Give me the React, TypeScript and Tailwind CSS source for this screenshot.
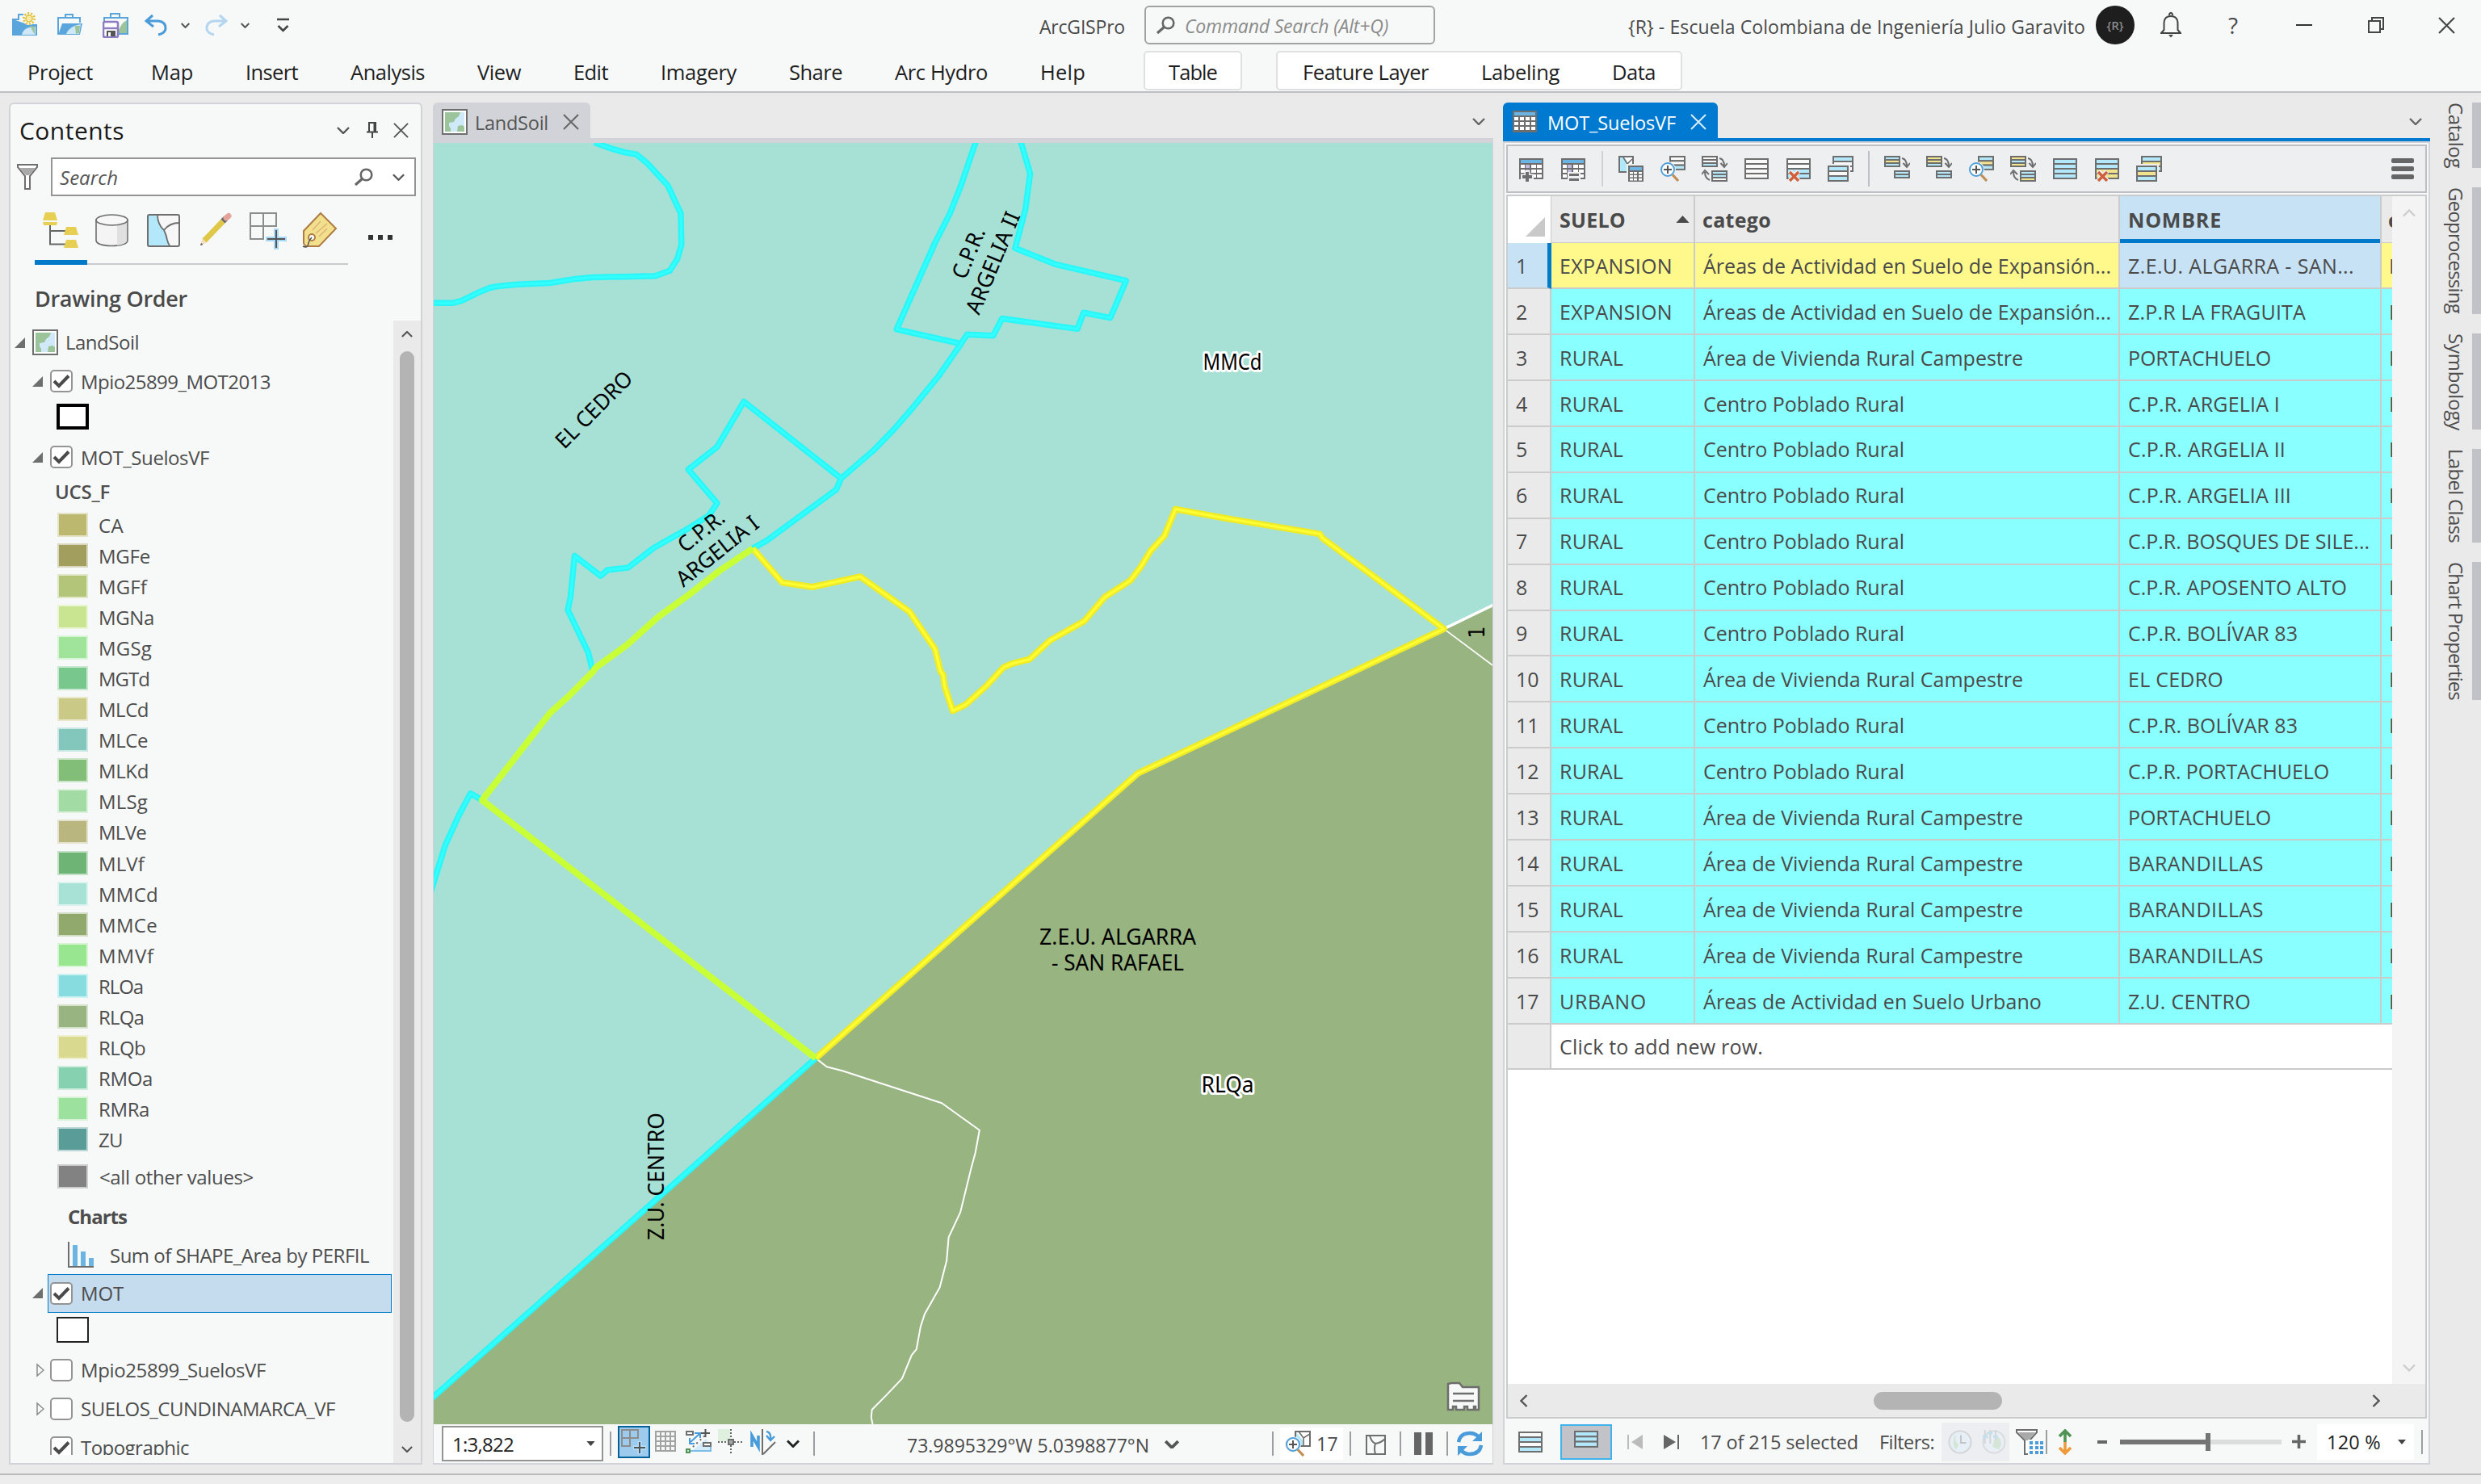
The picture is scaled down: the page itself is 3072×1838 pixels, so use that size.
import React, { useLayoutEffect, useRef, useState } from "react";

/* Text run whose tracking is adjusted so that it fills the given advance width. */
function T({ w, className = "", vertical = false, children }: { w: number; className?: string; vertical?: boolean; children: string }) {
  const ref = useRef<HTMLSpanElement>(null);
  const [ls, setLs] = useState(0);
  useLayoutEffect(() => {
    const el = ref.current;
    if (!el) return;
    el.style.letterSpacing = "0px";
    const natural = vertical ? el.getBoundingClientRect().height : el.getBoundingClientRect().width;
    const next = (w - natural) / children.length;
    el.style.letterSpacing = `${next}px`;
    setLs(next);
  }, [w, children, vertical]);
  return (
    <span ref={ref} className={`block shrink-0 whitespace-pre ${vertical ? "h-fit" : "w-fit"} ${className}`} style={{ letterSpacing: `${ls}px` }}>
      {children}
    </span>
  );
}

const G = "#6e6e6e";
const BLUE = "#6cb4e4";
const AQUA = "#b3e8fa";
const SAND = "#f1e28e";
const W = "#f9f9f9";

type IconProps = { className?: string; children?: React.ReactNode; vb?: string };
function Svg({ className = "size-8", children, vb = "0 0 32 32" }: IconProps) {
  return (
    <svg viewBox={vb} className={`block shrink-0 ${className}`} fill="none">
      {children}
    </svg>
  );
}

function Chevron({ className = "h-[9px] w-4", color = "#555", sw = 2.4, dir = "down" }: { className?: string; color?: string; sw?: number; dir?: string }) {
  const d = dir === "down" ? "M1 1 8 8 15 1" : dir === "up" ? "M1 8 8 1 15 8" : dir === "left" ? "M8 1 1 8 8 15" : "M1 1 8 8 1 15";
  const vb = dir === "down" || dir === "up" ? "0 0 16 9" : "0 0 9 16";
  return (
    <Svg className={className} vb={vb}>
      <path d={d} stroke={color} strokeWidth={sw} />
    </Svg>
  );
}

function Cross({ className = "size-[19px]", color = "#555" }: { className?: string; color?: string }) {
  return (
    <Svg className={className} vb="0 0 20 20">
      <path d="M1 1 19 19M19 1 1 19" stroke={color} strokeWidth={2} />
    </Svg>
  );
}

function Magnifier({ className = "h-[22px] w-[24px]" }: { className?: string }) {
  return (
    <Svg className={className} vb="0 0 24 22">
      <circle cx="15.5" cy="8.5" r="6.8" stroke="#666" strokeWidth="2.6" />
      <path d="M10.5 13.5 2 21" stroke="#666" strokeWidth="3.2" />
    </Svg>
  );
}

function MapIcon() {
  return (
    <Svg>
      <rect x="1" y="1" width="30" height="30" fill="#fff" stroke={G} strokeWidth="2" />
      <rect x="4" y="4" width="24" height="24" fill="#d0e9f8" />
      <path d="M4 4H23L21 9 17 12 15 16 9 17 9 21 11 24 11 28H4Z" fill="#9bc49b" />
      <path d="M19 28 20 21 25 20 28 22V28Z" fill="#9bc49b" />
    </Svg>
  );
}

/* Bordered stack of equal rows, used by the selection icons. */
function Stack({ x, y, w, rh, fills }: { x: number; y: number; w: number; rh: number; fills: string[] }) {
  return (
    <g stroke={G} strokeWidth="2">
      {fills.map((f, i) => (
        <rect key={i} x={x + 1} y={y + 1 + i * rh} width={w - 2} height={rh} fill={f} />
      ))}
    </g>
  );
}

function FieldIcon({ minus = false }: { minus?: boolean }) {
  return (
    <Svg>
      <rect x="1" y="3" width="30" height="26" fill={G} />
      <rect x="3" y="5" width="26" height="4" fill={BLUE} />
      {[11, 17, 23].map((y) =>
        [3, 9, 16, 23].map((x) => <rect key={`${x}-${y}`} x={x} y={y} width={x === 3 || x === 9 ? 5 : 6} height="4" fill={x === 9 ? "#c3bcdf" : "#fff"} />)
      )}
      {minus ? (
        <>
          <rect x="9" y="20" width="16" height="12" fill="#eeeff1" />
          <path d="M11 23.5H23M11 29.5H23" stroke={G} strokeWidth="3" />
        </>
      ) : (
        <>
          <path d="M11 18V33M3 26H19" stroke="#eeeff1" strokeWidth="7" />
          <path d="M11 20V32M5 26H17" stroke={G} strokeWidth="4" />
        </>
      )}
    </Svg>
  );
}

function CalcIcon() {
  return (
    <Svg>
      <path d="M2 1H19V20H2Z" fill={AQUA} stroke={G} strokeWidth="2" />
      <path d="M8 2H18V12L13 9Z" fill="#fff" />
      <path d="M7 2 12 10 18 4M12 10 14 19" stroke={G} strokeWidth="1.6" />
      <rect x="11" y="10" width="22" height="22" fill="#eeeff1" />
      <rect x="13" y="12" width="19" height="20" fill={G} />
      <rect x="15" y="14" width="15" height="4" fill={BLUE} />
      {[20, 24, 28].map((y) => [15, 20, 26].map((x) => <rect key={`${x}-${y}`} x={x} y={y} width="4" height="2.5" fill="#fff" />))}
    </Svg>
  );
}

function Lens() {
  return (
    <>
      <circle cx="10" cy="17" r="10" fill="#eeeff1" />
      <circle cx="10" cy="17" r="8" fill="#fff" stroke="#4f9fd8" strokeWidth="2" />
      <path d="M16 23.5 23 31" stroke="#c08f55" strokeWidth="3.2" />
      <path d="M10 12V22M5 17H15" stroke="#555" strokeWidth="2" />
    </>
  );
}

function ZoomSel({ alt = false }: { alt?: boolean }) {
  return (
    <Svg>
      <Stack x={12} y={0} w={20} rh={5.3} fills={alt ? [AQUA, SAND, AQUA] : [W, W, AQUA]} />
      <Lens />
    </Svg>
  );
}

function SwitchSel({ alt = false }: { alt?: boolean }) {
  return (
    <Svg>
      <Stack x={0} y={0} w={20} rh={4} fills={alt ? [SAND, AQUA, SAND] : [W, W, AQUA]} />
      <Stack x={12} y={18} w={20} rh={4} fills={alt ? [AQUA, AQUA, SAND] : [AQUA, AQUA, W]} />
      <path d="M22 3Q28 4 28 13M23.5 9 28 14 32 9M10 30Q4 28 4 20M0 23 4 18 9 23" stroke={G} strokeWidth="2" />
    </Svg>
  );
}

function FullStack({ fills }: { fills: string[] }) {
  return (
    <Svg>
      <Stack x={1} y={3} w={30} rh={6} fills={fills} />
    </Svg>
  );
}

function DeleteSel({ fills }: { fills: string[] }) {
  return (
    <Svg>
      <Stack x={1} y={3} w={30} rh={6} fills={fills} />
      <path d="M5 19 16 31M16 19 5 31" stroke="#eeeff1" strokeWidth="6" />
      <path d="M5 20 16 31M16 20 5 31" stroke="#d0603d" strokeWidth="3.4" />
    </Svg>
  );
}

function CopySel({ alt = false }: { alt?: boolean }) {
  return (
    <Svg>
      <Stack x={6} y={0} w={26} rh={6} fills={alt ? [AQUA, SAND, AQUA] : [AQUA, W, W]} />
      <rect x="-1" y="10" width="29" height="23" fill="#eeeff1" />
      <Stack x={0} y={12} w={26} rh={6} fills={alt ? [AQUA, SAND, AQUA] : [AQUA, W, AQUA]} />
    </Svg>
  );
}

function MoveSel({ fills }: { fills: string[] }) {
  return (
    <Svg>
      <Stack x={0} y={0} w={20} rh={4} fills={fills} />
      <Stack x={12} y={18} w={20} rh={4} fills={[AQUA, AQUA]} />
      <path d="M22 3Q28 4 28 13M23.5 9 28 14 32 9" stroke={G} strokeWidth="2" />
    </Svg>
  );
}

function TitleBar() {
  return (
    <div className="flex h-[62px] items-center text-[23px] text-[#4a4a4a]">
      <Svg className="ml-[15px] size-8">
        <path d="M0 9H8V3H14" stroke="#5aa6dc" strokeWidth="2" />
        <path d="M1 9V28H30V16H22" fill="#5aa6dc" stroke="#5aa6dc" strokeWidth="2" />
        <path d="M12 28Q14 18 29 18V28Z" fill="#cfe8f8" />
        <path d="M22 17 28 28V18Z" fill="#9bc49b" />
        <circle cx="21" cy="8" r="8" fill="#f7f9f8" />
        <circle cx="21" cy="8" r="6.5" stroke="#dfc23d" strokeWidth="3" strokeDasharray="2 2" />
        <circle cx="21" cy="8" r="4" fill="#f7eaa6" stroke="#dfc23d" strokeWidth="1.5" />
      </Svg>
      <Svg className="ml-[24px] size-8">
        <path d="M1 28V7H28V13M10 7V3H19V7" stroke="#5aa6dc" strokeWidth="2" />
        <path d="M6 14H31L28 28H1Z" fill="#5aa6dc" />
        <path d="M11 27Q15 17 29 15L27 27Z" fill="#cfe8f8" />
        <path d="M22 17 23 27 27 26 28 17Z" fill="#9bc49b" />
      </Svg>
      <Svg className="ml-[24px] size-8">
        <path d="M2 12V7H31V27H18M10 7V2H21V7" stroke="#5aa6dc" strokeWidth="2" />
        <path d="M19 26Q22 14 30 10V26Z" fill="#9bc49b" />
        <rect x="1" y="12" width="18" height="19" rx="2" fill="#fff" stroke="#8e7cc3" strokeWidth="2.6" />
        <path d="M2 20H18" stroke="#8e7cc3" strokeWidth="2.4" />
        <rect x="5" y="23" width="11" height="7" fill="#555" />
        <rect x="7" y="25" width="3" height="5" fill="#fff" />
      </Svg>
      <Svg className="ml-[20px] h-[28px] w-[29px]" vb="0 0 29 28">
        <path d="M10 2 2 9 11 16M3 9H17Q26 10 26 18 26 24 17 26" stroke="#4a9bd9" strokeWidth="3" />
      </Svg>
      <Chevron className="ml-[16px] h-[7px] w-[11px]" sw={3} />
      <Svg className="ml-[18px] h-[28px] w-[29px]" vb="0 0 29 28">
        <path d="M19 2 27 9 18 16M26 9H12Q3 10 3 18 3 24 12 26" stroke="#b4d6f0" strokeWidth="3" />
      </Svg>
      <Chevron className="ml-[16px] h-[7px] w-[11px]" sw={3} />
      <Svg className="ml-[34px] h-[18px] w-[15px]" vb="0 0 15 18">
        <path d="M0 2H15M1.5 10 7.5 16 13.5 10" stroke="#444" strokeWidth="2.6" />
      </Svg>
      <T w={106} className="ml-[929px] pt-1">ArcGISPro</T>
      <div className="ml-[24px] flex h-[48px] w-[360px] items-center rounded-[6px] border-2 border-[#a0a2a4] bg-[#f7f9f8] text-[#8b8b8b]">
        <Magnifier className="ml-[12px] h-[22px] w-[24px]" />
        <T w={252} className="ml-[12px] pt-0.5 italic">Command Search (Alt+Q)</T>
      </div>
      <T w={566} className="ml-[239px] pt-1">{"{R} - Escuela Colombiana de Ingeniería Julio Garavito"}</T>
      <div className="ml-[13px] flex size-[48px] items-center justify-center rounded-full bg-[#1e1e1e] text-[15px] font-semibold text-[#8a8a8a]">{"{R}"}</div>
      <Svg className="ml-[32px] h-[32px] w-[26px]" vb="0 0 26 32">
        <path d="M1 26H25L21.5 22V13Q21 5 13 5 5 5 4.5 13V22L1 26ZM11 4Q11 1 13 1 15 1 15 4" stroke="#444" strokeWidth="2" />
        <path d="M10 28H16L13 31.5Z" fill="#444" />
      </Svg>
      <T w={15} className="ml-[58px] text-[28px]">?</T>
      <Svg className="ml-[69px] h-[4px] w-[20px]" vb="0 0 20 4">
        <path d="M0 2H20" stroke="#333" strokeWidth="2" />
      </Svg>
      <Svg className="ml-[69px] size-[20px]" vb="0 0 20 20">
        <path d="M1 5H15V19H1ZM5 5V1H19V15H15" stroke="#444" strokeWidth="2" />
      </Svg>
      <Cross className="ml-[67px] size-[21px]" color="#444" />
    </div>
  );
}

function Ribbon() {
  return (
    <div className="flex h-[51px] items-center text-[25.5px] text-[#1f1f1f]">
      <T w={81} className="ml-[34px] pt-[3px]">Project</T>
      <div className="ml-[72px] flex gap-[65px] pt-[3px]">
        <T w={52}>Map</T>
        <T w={65}>Insert</T>
        <T w={92}>Analysis</T>
        <T w={54}>View</T>
        <T w={43}>Edit</T>
        <T w={94}>Imagery</T>
        <T w={66}>Share</T>
        <T w={115}>Arc Hydro</T>
        <T w={56}>Help</T>
      </div>
      <div className="ml-[72px] flex h-[49px] w-[122px] items-center justify-center rounded-[5px] border-2 border-[#dfe0e1] bg-white pt-[3px]">
        <T w={60}>Table</T>
      </div>
      <div className="ml-[42px] flex h-[49px] w-[503px] items-center gap-[65px] rounded-[5px] border-2 border-[#dfe0e1] bg-white pt-[3px] pl-[31px]">
        <T w={156}>Feature Layer</T>
        <T w={97}>Labeling</T>
        <T w={54}>Data</T>
      </div>
    </div>
  );
}

const legend: [string, string, number][] = [
  ["CA", "bg-[#bdb870]", 31],
  ["MGFe", "bg-[#a19e5e]", 64],
  ["MGFf", "bg-[#b3c578]", 60],
  ["MGNa", "bg-[#c9e591]", 69],
  ["MGSg", "bg-[#a0e39b]", 66],
  ["MGTd", "bg-[#78c78d]", 63],
  ["MLCd", "bg-[#cac985]", 62],
  ["MLCe", "bg-[#82c6bc]", 61],
  ["MLKd", "bg-[#82be78]", 62],
  ["MLSg", "bg-[#a3dba5]", 61],
  ["MLVe", "bg-[#b9b67f]", 59],
  ["MLVf", "bg-[#6eb575]", 57],
  ["MMCd", "bg-[#a8e1d6]", 74],
  ["MMCe", "bg-[#92a96e]", 73],
  ["MMVf", "bg-[#98e68f]", 69],
  ["RLOa", "bg-[#86dcdf]", 55],
  ["RLQa", "bg-[#98b480]", 56],
  ["RLQb", "bg-[#d9da90]", 58],
  ["RMOa", "bg-[#86d2b0]", 67],
  ["RMRa", "bg-[#9de19f]", 63],
  ["ZU", "bg-[#5a9c97]", 30],
];

function Check({ on = false }: { on?: boolean }) {
  return (
    <div className="flex size-[28px] shrink-0 items-center justify-center rounded-[5px] border-2 border-[#949494] bg-white">
      {on && (
        <Svg className="h-[18px] w-[22px]" vb="0 0 22 18">
          <path d="M2 9 8 15 20 2.5" stroke="#4a4a4a" strokeWidth="4" />
        </Svg>
      )}
    </div>
  );
}

function Open() {
  return (
    <Svg className="h-[13px] w-[13px]" vb="0 0 13 13">
      <path d="M13 0V13H0Z" fill={G} />
    </Svg>
  );
}

function Layer({ name, w, on = false, open = "open", selected = false }: { name: string; w: number; on?: boolean; open?: string; selected?: boolean }) {
  return (
    <div className="flex h-[48px] shrink-0 items-center">
      <div className="flex w-[46px] justify-end">
        {open === "open" && (
          <div className="mr-[6px]">
            <Open />
          </div>
        )}
        {open === "closed" && (
          <Svg className="mr-[4px] h-[18px] w-[10px]" vb="0 0 10 18">
            <path d="M1 2V16L9 9Z" stroke="#8a8a8a" strokeWidth="1.5" />
          </Svg>
        )}
      </div>
      <div className={`flex h-full w-[426px] items-center border pl-[2px] ${selected ? "border-[#0079c8] bg-[#c5dbee]" : "border-transparent"}`}>
        <Check on={on} />
        <T w={w} className="ml-[10px] pt-px">{name}</T>
      </div>
    </div>
  );
}

function Contents() {
  return (
    <div className="mt-[12px] ml-[11px] flex h-[1687px] w-[512px] shrink-0 flex-col rounded-t-[6px] border-2 border-[#d1d3d8] bg-[#f7f9f8]">
      <div className="flex h-[64px] items-center">
        <T w={130} className="ml-[11px] text-[30px] text-[#1a1a1a]">Contents</T>
        <Chevron className="ml-[263px] h-[9px] w-4" />
        <Svg className="ml-[21px] h-[20px] w-[14px]" vb="0 0 14 20">
          <path d="M3 12V1H11V12M0 12.5H14M7 13V20" stroke="#444" strokeWidth="2" />
          <path d="M10 1V12" stroke="#444" strokeWidth="3" />
        </Svg>
        <Cross className="ml-[19px] size-[19px]" />
      </div>
      <div className="mt-[2px] flex h-[48px] items-center text-[24px]">
        <Svg className="ml-[8px] h-[32px] w-[26px]" vb="0 0 26 32">
          <path d="M1 1H25V4L16 15V31H10V15L1 4Z" fill="#fff" stroke={G} strokeWidth="2" />
          <path d="M3 5H23L15 14H11Z" fill="#a9a9a9" />
        </Svg>
        <div className="ml-[16px] flex h-full w-[452px] items-center border-2 border-[#949494] bg-white text-[#555]">
          <T w={72} className="ml-[9px] pt-px italic">Search</T>
          <Magnifier className="ml-auto h-[22px] w-[24px]" />
          <Chevron className="mr-[12px] ml-[24px] h-[9px] w-[15px]" />
        </div>
      </div>
      <div className="mt-[18px] flex h-[67px]">
        <div className="ml-[30px] grid w-[388px] grid-cols-6 border-b-2 border-[#c8cacc]">
          <div className="-mb-[2px] flex justify-center border-b-[6px] border-[#0079c8]">
            <Svg className="size-12" vb="0 0 48 48">
              <path d="M11 18V41.5H30M11 25H30" stroke="#666" strokeWidth="2" />
              <path d="M5 2H17L20 12H2ZM2 14H20L19 18H3ZM31 20H43L46 30H28ZM31 36H43L46 46H28Z" fill="#e6cf52" />
            </Svg>
          </div>
          <div className="flex justify-center pr-[3px]">
            <Svg className="size-12" vb="0 0 48 48">
              <path d="M5 11V37Q6 43 24 43.5 43 43 44 37V11Z" fill="#f4f4f4" stroke={G} strokeWidth="1.6" />
              <path d="M31 17V43Q43 41 43 37V12Q42 16 31 17Z" fill="#e0e0e0" />
              <ellipse cx="24.5" cy="11.5" rx="19.5" ry="6.5" fill="#f7f7f7" stroke={G} strokeWidth="1.6" />
            </Svg>
          </div>
          <div className="flex justify-center pr-[3px]">
            <Svg className="size-12" vb="0 0 48 48">
              <rect x="4" y="5" width="39" height="39" rx="2" fill="#f7f7f7" />
              <path d="M4 5H16Q16 18 24 24 28 34 31 44H4Z" fill={AQUA} />
              <path d="M16 5Q16 17 24 24 27 30 28 36 30 43 32 44M24 24Q31 15 43 15" stroke={G} strokeWidth="1.8" />
              <rect x="4" y="5" width="39" height="39" rx="2" stroke={G} strokeWidth="2" />
            </Svg>
          </div>
          <div className="flex justify-center pr-[4px]">
            <Svg className="size-12" vb="0 0 48 48">
              <path d="M10 37 33 13" stroke="#dfc848" strokeWidth="7" />
              <path d="M33 13 36.5 9.5" stroke="#666" strokeWidth="7" />
              <path d="M37 9 40 6.5" stroke="#e5a49a" strokeWidth="7" strokeLinecap="round" />
              <path d="M7.5 34.5 12.5 39.5 5 43Z" fill="#f5dcc0" />
              <path d="M5 43 6 40 8.5 42Z" fill="#555" />
            </Svg>
          </div>
          <div className="flex justify-center pr-[2px]">
            <Svg className="size-12" vb="0 0 48 48">
              <path d="M1 3H33V19H1ZM17 3V35H1V3M17 19V35" stroke="#8c8c8c" strokeWidth="2" />
              <path d="M33 22V48M20 35H46" stroke="#a8d8f5" strokeWidth="6" />
              <path d="M33 24V46M22 35H44" stroke="#555" strokeWidth="2" />
            </Svg>
          </div>
          <div className="flex justify-center pr-[4px]">
            <Svg className="size-12" vb="0 0 48 48">
              <path d="M24 3 43 22 22 44H6Q3 42 3 40V25Z" fill="#f2e08c" stroke="#b07c45" strokeWidth="2" />
              <path d="M14 24 24 13M18 28 32 16M22 32 32 22" stroke="#dfb37c" strokeWidth="1.5" />
              <circle cx="13" cy="33" r="4" fill="#fff" stroke="#b07c45" strokeWidth="2" />
              <path d="M13 33Q10 36 9 40 8 47 2 44" stroke="#555" strokeWidth="1.6" />
            </Svg>
          </div>
        </div>
        <div className="mt-[30px] ml-[25px] flex gap-[6px]">
          <div className="size-[6px] bg-[#333]" />
          <div className="size-[6px] bg-[#333]" />
          <div className="size-[6px] bg-[#333]" />
        </div>
      </div>
      <div className="h-[69px] pt-[28px] pl-[30px] text-[27px] leading-[28px] font-semibold text-[#4a4a4a]">
        <T w={189}>Drawing Order</T>
      </div>
      <div className="flex text-[24px] text-[#4d4d4d]">
        <div className="flex h-[1405px] w-[474px] flex-col overflow-hidden pt-[3px]">
          <div className="flex h-[48px] shrink-0 items-center pl-[5px]">
            <Open />
            <div className="ml-[9px]">
              <MapIcon />
            </div>
            <T w={91} className="ml-[9px]">LandSoil</T>
          </div>
          <Layer name="Mpio25899_MOT2013" w={235} on />
          <div className="h-[46px] shrink-0 pt-[4px] pl-[57px]">
            <div className="h-[32px] w-[40px] border-4 border-black bg-white" />
          </div>
          <Layer name="MOT_SuelosVF" w={159} on />
          <div className="flex h-[38px] shrink-0 items-center pl-[55px] font-semibold">
            <T w={68}>UCS_F</T>
          </div>
          <div className="mt-[3px] flex shrink-0 flex-col">
            {legend.map(([n, c, w]) => (
              <div key={n} className="flex h-[38.05px] items-center pl-[58px]">
                <div className={`h-[30px] w-[38px] border-2 border-white/60 ${c}`} />
                <T w={w} className="ml-[13px] pt-[2px]">{n}</T>
              </div>
            ))}
          </div>
          <div className="mt-[4px] flex h-[46px] shrink-0 items-center pl-[58px]">
            <div className="h-[30px] w-[38px] border-2 border-white/60 bg-[#828282]" />
            <T w={191} className="ml-[14px] pt-[2px]">{"<all other values>"}</T>
          </div>
          <div className="mt-[2px] flex h-[48px] shrink-0 items-center pt-[2px] pl-[71px] font-bold">
            <T w={73}>Charts</T>
          </div>
          <div className="flex h-[48px] shrink-0 items-center pl-[71px]">
            <Svg>
              <path d="M1 0V31H32" stroke={G} strokeWidth="2" />
              <path d="M6 4H12V30H6ZM16 12H22V30H16ZM26 20H32V30H26Z" fill={BLUE} />
            </Svg>
            <T w={321} className="ml-[20px] pt-[2px]">Sum of SHAPE_Area by PERFIL</T>
          </div>
          <Layer name="MOT" w={53} on selected />
          <div className="h-[47px] shrink-0 pt-[5px] pl-[57px]">
            <div className="h-[32px] w-[40px] border-2 border-[#222] bg-white" />
          </div>
          <Layer name="Mpio25899_SuelosVF" w={229} open="closed" />
          <Layer name="SUELOS_CUNDINAMARCA_VF" w={315} open="closed" />
          <Layer name="Topographic" w={134} on open="none" />
        </div>
        <div className="flex h-[1415px] w-[34px] flex-col items-center bg-[#eaeaea] pt-[13px]">
          <Chevron dir="up" className="h-[8px] w-[14px]" />
          <div className="mt-[17px] h-[1326px] w-[18px] rounded-full bg-[#b4b4b4]" />
          <Chevron className="mt-[30px] h-[8px] w-[14px]" />
        </div>
      </div>
    </div>
  );
}

/* Map lines are digitised on a sheet that is stretched to the view's size. */
const road = "243,14 270,32 288,41 304,46 320,70 350,130 362,178 369,205 370,290 364,328 353,360 332,374 240,378 215,382 178,393 130,397 105,401 90,406 72,420 50,440 37,447 0,447";
const argelia2 = "800,10 778,130 762,205 740,285 684,518 778,557 787,532 825,535 838,489 948,517 957,473 996,487 1019,387 915,342 857,299 872,195 879,98 865,10";
const argelia1 = "778,557 745,645 705,735 680,788 650,845 603,920 461,713 422,835 380,896 422,987 410,1020 380,1055 330,1107 310,1135 292,1161 262,1167 252,1183 214,1129 208,1240 204,1275 234,1390 240,1437";
const link = "603,920 596,950 495,1087 474,1109";
const west = "79,1788 62,1770 45,1829 25,1910 8,2012 0,2060";
const south = "566,2484 0,3410";
const yellow = "474,1109 517,1201 561,1213 631,1185 703,1280 740,1380 748,1440 752,1450 754,1480 766,1547 785,1530 815,1480 840,1430 852,1420 878,1408 908,1357 958,1305 988,1240 1025,1196 1040,1160 1055,1115 1075,1075 1085,1030 1091,1003 1165,1028 1302,1070 1305,1080 1483,1326 1036,1716 566,2484";
const lime = "474,1109 425,1170 385,1228 335,1295 290,1370 245,1430 240,1443 205,1508 178,1553 79,1788 566,2484";
const stream = "568,2487 582,2507 605,2518 750,2605 805,2678 799,2739 793,2780 777,2900 760,2967 757,3031 747,3102 725,3174 719,3208 713,3269 706,3285 692,3348 670,3391 648,3432 647,3453 650,3480";

function Line({ p, c, w }: { p: string; c: string; w: number }) {
  return <polyline points={p} stroke={c} strokeWidth={w} fill="none" vectorEffect="non-scaling-stroke" strokeLinejoin="round" />;
}

function Label({ x, y, len, rot = 0, halo = false, children }: { x: number; y: number; len: number; rot?: number; halo?: boolean; children: string }) {
  return (
    <text
      transform={`translate(${x} ${y}) rotate(${rot})`}
      textAnchor="middle"
      textLength={len}
      lengthAdjust="spacingAndGlyphs"
      fontSize="27"
      fill="#000"
      stroke={halo ? "#fff" : "none"}
      strokeWidth={halo ? 6 : 0}
      strokeLinejoin="round"
      paintOrder="stroke"
      className="font-['Noto_Sans',sans-serif]"
    >
      {children}
    </text>
  );
}

function MapView() {
  return (
    <svg viewBox="0 0 1311 1587" className="block h-[1587px] w-[1311px] bg-[#a7e1d6]">
      <g transform="translate(-7 -7) scale(0.8482 0.4592)">
        <polygon points="1570,1248 1483,1326 1036,1716 566,2484 0,3410 0,3500 1570,3500" fill="#98b480" />
        <Line p="1483,1326 1570,1248" c="#fff" w={3.5} />
        <Line p="1483,1326 1570,1446" c="#fff" w={1.8} />
        <Line p={stream} c="#fff" w={2} />
        {[road, argelia2, argelia1, link, west, south].map((p) => (
          <g key={p}>
            <Line p={p} c="#2af5f7" w={7.5} />
            <Line p={p} c="#33ffff" w={3} />
          </g>
        ))}
        <Line p={yellow} c="#efeb26" w={8} />
        <Line p={yellow} c="#ffff33" w={3} />
        <Line p={lime} c="#c8ff36" w={8} />
      </g>
      <Label x={989} y={281} len={73} halo>MMCd</Label>
      <Label x={205} y={337} len={122} rot={-45}>EL CEDRO</Label>
      <Label x={671} y={140} len={66} rot={-67.5}>C.P.R.</Label>
      <Label x={701} y={152} len={134} rot={-67.5}>ARGELIA II</Label>
      <Label x={337} y={488} len={66} rot={-38.5}>C.P.R.</Label>
      <Label x={357} y={513} len={122} rot={-38.5}>ARGELIA I</Label>
      <text transform="translate(1301 606) rotate(-90)" textAnchor="middle" fontSize="26" className="font-['DejaVu_Sans_Condensed','DejaVu_Sans',sans-serif]">1</text>
      <Label x={847} y={993} len={194}>Z.E.U. ALGARRA</Label>
      <Label x={847} y={1025} len={164}>- SAN RAFAEL</Label>
      <Label x={983} y={1176} len={65} halo>RLQa</Label>
      <Label x={285} y={1280} len={158} rot={-90}>Z.U. CENTRO</Label>
      <path d="M1256 1537V1569H1262V1565H1266V1569H1276V1565H1280V1569H1288V1565H1290V1569H1294V1541H1274L1270 1536H1260Z" fill="#f7f9f8" stroke={G} strokeWidth="2.5" />
      <path d="M1262 1549H1288M1262 1558H1288" stroke={G} strokeWidth="2.5" />
    </svg>
  );
}

function Sep({ className }: { className: string }) {
  return <div className={`h-[30px] w-[2px] shrink-0 bg-[#9c9fa1] ${className}`} />;
}

function MapPane() {
  return (
    <div className="mt-[12px] ml-[13px] flex w-[1313px] shrink-0 flex-col">
      <div className="flex h-[44px] items-center">
        <div className="flex h-full w-[195px] items-center rounded-t-[6px] bg-[#d1d3d8] text-[23.5px] text-[#555]">
          <div className="ml-[11px] pt-[4px]">
            <MapIcon />
          </div>
          <T w={91} className="ml-[9px] pt-[7px]">LandSoil</T>
          <Cross className="mt-[4px] ml-[18px] size-[20px]" color="#666" />
        </div>
        <Chevron className="mt-[3px] mr-[10px] ml-auto h-[9px] w-4" color="#666" />
      </div>
      <div className="h-[6px] bg-[#d1d3d8]" />
      <div className="h-[1637px] overflow-hidden border border-t-0 border-b-2 border-[#d1d3d8] bg-[#f7f9f8]">
        <MapView />
        <div className="flex h-[48px] items-center text-[23px] text-[#4a4a4a]">
          <div className="ml-[10px] flex h-[44px] w-[200px] shrink-0 items-center border-2 border-[#949494] bg-white text-[24px] text-[#222]">
            <T w={76} className="ml-[11px] pt-px">1:3,822</T>
            <Svg className="mr-[8px] mb-px ml-auto h-[6px] w-[11px]" vb="0 0 12 7">
              <path d="M0 0H12L6 7Z" fill="#444" />
            </Svg>
          </div>
          <Sep className="ml-[8px]" />
          <div className="mb-[4px] ml-[8px] flex h-[40px] w-[40px] shrink-0 items-center justify-center border-2 border-[#00619b] bg-[#9dcbed]">
            <Svg>
              <path d="M1 1H21V11H1ZM11 1V21H1V1" stroke="#8c8c8c" strokeWidth="2" />
              <path d="M23 15V31M15 23H31" stroke="#b4dffa" strokeWidth="5" />
              <path d="M23 16V30M16 23H30" stroke="#555" strokeWidth="2" />
            </Svg>
          </div>
          <Svg className="mb-[6px] ml-[6px] size-[26px]" vb="0 0 26 26">
            <path d="M1 1H25V25H1ZM1 7H25M1 13H25M1 19H25M7 1V25M13 1V25M19 1V25" stroke="#a3a3a3" strokeWidth="2" />
          </Svg>
          <Svg className="mb-[4px] ml-[12px] size-8">
            <path d="M8 27 25 12Q30 18 31 27Z" fill="#d3ebfb" />
            <path d="M5 27H32M31 22V27" stroke="#7dbde8" strokeWidth="2" />
            <path d="M9 22 24 8" stroke="#666" strokeWidth="2" strokeDasharray="2 4" />
            <path d="M6 16 17 6M11 5H18V11M5 11V18H11" stroke="#4a9bd9" strokeWidth="2" />
            <path d="M1 3H9V7H1ZM22 17H31V21H22Z" fill="#fff" stroke={G} strokeWidth="2" />
            <path d="M24.500 0V10M19 5H30" stroke="#555" strokeWidth="2" />
            <path d="M1 25H5V29H1Z" fill="#cfe6d0" stroke="#4f9455" strokeWidth="2" />
          </Svg>
          <Svg className="mb-[4px] ml-[8px] size-8">
            <path d="M0 0H15V15H0Z" fill="#dff0df" />
            <path d="M16 0V32M0 16H32" stroke="#666" strokeWidth="2" strokeDasharray="2 2" />
            <rect x="13" y="13" width="6" height="6" fill="#aaa" stroke={G} strokeWidth="2" />
          </Svg>
          <Svg className="mb-[4px] ml-[8px] size-8">
            <path d="M2 22V8L10 22V8" stroke="#4a9bd9" strokeWidth="3.6" />
            <path d="M15 0V32M16 31 31 16" stroke={G} strokeWidth="2" />
            <path d="M20 3Q26 4 25 13M20 8 25 14 30 9" stroke="#4a9bd9" strokeWidth="2.400" />
          </Svg>
          <Chevron className="ml-[13px] h-[10px] w-[16px]" color="#222" sw={3} />
          <Sep className="ml-[17px]" />
          <T w={300} className="ml-[114px] pt-[5px]">73.9895329°W 5.0398877°N</T>
          <Chevron className="mt-[2px] ml-[19px] h-[10px] w-[18px]" color="#555" sw={3.4} />
          <Sep className="ml-[115px]" />
          <div className="ml-[8px] flex h-[40px] w-[78px] shrink-0 items-center bg-white">
            <Svg className="ml-[6px] size-8">
              <path d="M13 1H31V19H13Z" fill="#fff" stroke={G} strokeWidth="2" />
              <path d="M14 2 22 12V18H14Z" fill={AQUA} />
              <path d="M17 1 23 9 31 4M23 9V19" stroke={G} strokeWidth="1.6" />
              <Lens />
            </Svg>
            <T w={27} className="ml-[7px] pt-px">17</T>
          </div>
          <Sep className="ml-[8px]" />
          <Svg className="mt-[2px] ml-[18px] size-[25px]" vb="0 0 25 25">
            <path d="M1 1H24V24H1ZM5 1Q7 9 12 11 19 10 24 5M12 11Q10 17 12 24" stroke={G} strokeWidth="2" />
          </Svg>
          <Sep className="ml-[17px]" />
          <div className="ml-[16px] flex gap-[5px]">
            <div className="h-[28px] w-[9px] bg-[#666]" />
            <div className="h-[28px] w-[9px] bg-[#666]" />
          </div>
          <Sep className="ml-[17px]" />
          <Svg className="ml-[11px] size-8">
            <path d="M2 14Q4 3 16 3 23 3 27 8M30 18Q28 29 16 29 9 29 5 24" stroke="#4a9bd9" strokeWidth="4.5" />
            <path d="M31 1V13H19ZM1 31V19H13Z" fill="#4a9bd9" />
          </Svg>
        </div>
      </div>
    </div>
  );
}

type Cell = [string, number];
const EXP: Cell = ["EXPANSION", 140];
const RUR: Cell = ["RURAL", 79];
const A1: Cell = ["Áreas de Actividad en Suelo de Expansión...", 505];
const VIV: Cell = ["Área de Vivienda Rural Campestre", 396];
const CEN: Cell = ["Centro Poblado Rural", 249];
const rows: [Cell, Cell, Cell][] = [
  [EXP, A1, ["Z.E.U. ALGARRA - SAN...", 280]],
  [EXP, A1, ["Z.P.R LA FRAGUITA", 220]],
  [RUR, VIV, ["PORTACHUELO", 177]],
  [RUR, CEN, ["C.P.R. ARGELIA I", 188]],
  [RUR, CEN, ["C.P.R. ARGELIA II", 195]],
  [RUR, CEN, ["C.P.R. ARGELIA III", 202]],
  [RUR, CEN, ["C.P.R. BOSQUES DE SILE...", 299]],
  [RUR, CEN, ["C.P.R. APOSENTO ALTO", 271]],
  [RUR, CEN, ["C.P.R. BOLÍVAR 83", 210]],
  [RUR, VIV, ["EL CEDRO", 118]],
  [RUR, CEN, ["C.P.R. BOLÍVAR 83", 210]],
  [RUR, CEN, ["C.P.R. PORTACHUELO", 249]],
  [RUR, VIV, ["PORTACHUELO", 177]],
  [RUR, VIV, ["BARANDILLAS", 168]],
  [RUR, VIV, ["BARANDILLAS", 168]],
  [RUR, VIV, ["BARANDILLAS", 168]],
  [["URBANO", 108], ["Áreas de Actividad en Suelo Urbano", 419], ["Z.U. CENTRO", 152]],
];

function Grid() {
  return (
    <div className="flex h-[1471px] bg-white text-[25px] text-[#4a4a4a]">
      <div className="w-[1095px] overflow-hidden">
        <div className="flex h-[58px] bg-[#eaeaea] font-bold">
          <div className="flex w-[54px] shrink-0 items-end justify-end border-r border-[#cbcbcb] bg-white pr-[7px] pb-[8px]">
            <Svg className="size-6" vb="0 0 24 24">
              <path d="M24 0V24H0Z" fill="#c9c9c9" />
            </Svg>
          </div>
          <div className="flex w-[178px] shrink-0 items-center border-r-2 border-b border-[#cbcbcb] pl-[10px]">
            <T w={82} className="pt-[2px]">SUELO</T>
            <Svg className="mr-[5px] ml-auto h-[9px] w-[17px]" vb="0 0 18 10">
              <path d="M0 10 9 0 18 10Z" fill="#4a4a4a" />
            </Svg>
          </div>
          <div className="flex w-[526px] shrink-0 items-center border-r-2 border-b border-[#cbcbcb] pt-[2px] pl-[9px]">
            <T w={85}>catego</T>
          </div>
          <div className="flex w-[324px] shrink-0 border-r-2 border-[#cbcbcb]">
            <div className="flex w-full items-center border-b-[5px] border-[#007ac9] bg-[#c7e2f5] pt-[7px] pl-[10px]">
              <T w={116}>NOMBRE</T>
            </div>
          </div>
          <div className="flex w-[13px] shrink-0 items-center overflow-hidden border-b border-[#cbcbcb] pt-[2px] pl-[8px]">c</div>
        </div>
        {rows.map(([a, b, c], i) => {
          const bg = i === 0 ? "bg-[#fff88a]" : "bg-[#8affff]";
          return (
            <div key={i} className="flex h-[56.94px]">
              <div className={`flex w-[54px] shrink-0 items-center border-b-2 border-b-[#cbcbcb] pt-[2px] pl-[10px] ${i === 0 ? "border-r-[5px] border-r-[#007ac9] bg-[#c7e2f5]" : "border-r-2 border-r-[#cbcbcb] bg-[#eaeaea]"}`}>
                {i + 1}
              </div>
              <div className={`flex w-[178px] shrink-0 items-center border-r-2 border-b-2 border-[#cbcbcb] pt-[2px] pl-[10px] ${bg}`}>
                <T w={a[1]}>{a[0]}</T>
              </div>
              <div className={`flex w-[526px] shrink-0 items-center border-r-2 border-b-2 border-[#cbcbcb] pt-[2px] pl-[10px] ${bg}`}>
                <T w={b[1]}>{b[0]}</T>
              </div>
              <div className={`flex w-[324px] shrink-0 items-center border-r-2 border-b-2 border-[#cbcbcb] pt-[2px] pl-[10px] ${i === 0 ? "bg-[#c7e2f5]" : bg}`}>
                <T w={c[1]}>{c[0]}</T>
              </div>
              <div className={`flex w-[13px] shrink-0 items-center overflow-hidden border-b-2 border-[#cbcbcb] pt-[2px] pl-[9px] ${bg}`}>E</div>
            </div>
          );
        })}
        <div className="flex h-[56px]">
          <div className="w-[54px] shrink-0 border-r-2 border-b-2 border-[#cbcbcb] bg-[#eaeaea]" />
          <div className="flex w-full items-center border-b-2 border-[#cbcbcb] pt-[2px] pl-[10px]">
            <T w={252}>Click to add new row.</T>
          </div>
        </div>
      </div>
      <div className="flex flex-1 flex-col items-center justify-between bg-[#f4f4f4] pt-[16px] pb-[15px]">
        <Chevron dir="up" className="h-[10px] w-[16px]" color="#cdcdcd" />
        <Chevron className="h-[10px] w-[16px]" color="#cdcdcd" />
      </div>
    </div>
  );
}

function Toolbar() {
  return (
    <div className="mt-[2px] ml-[2px] flex h-[60px] w-[1140px] items-center border-2 border-[#bcbfc3] bg-[#eeeff1]">
      <div className="ml-[13px] flex gap-[20px]">
        <FieldIcon />
        <FieldIcon minus />
      </div>
      <div className="ml-[19px] h-[44px] w-[2px] bg-[#d0d2d4]" />
      <div className="ml-[18px] flex gap-[20px]">
        <CalcIcon />
        <ZoomSel />
        <SwitchSel />
        <FullStack fills={[W, W, W, W]} />
        <DeleteSel fills={[W, W, AQUA, AQUA]} />
        <CopySel />
      </div>
      <div className="ml-[18px] h-[44px] w-[2px] bg-[#bcbfc3]" />
      <div className="ml-[18px] flex gap-[20px]">
        <MoveSel fills={[AQUA, SAND, AQUA]} />
        <MoveSel fills={[SAND, SAND, AQUA]} />
        <ZoomSel alt />
        <SwitchSel alt />
        <FullStack fills={[AQUA, AQUA, AQUA, AQUA]} />
        <DeleteSel fills={[AQUA, AQUA, SAND, SAND]} />
        <CopySel alt />
      </div>
      <div className="mr-[14px] ml-auto flex w-[28px] flex-col gap-[4px]">
        <div className="h-[6px] rounded-[2px] bg-[#666]" />
        <div className="h-[6px] rounded-[2px] bg-[#666]" />
        <div className="h-[6px] rounded-[2px] bg-[#666]" />
      </div>
    </div>
  );
}

function TableStatus() {
  return (
    <div className="flex h-[55px] items-center pt-[2px] text-[23.5px] text-[#4a4a4a]">
      <div className="ml-[16px]">
        <FullStack fills={[W, AQUA, W, AQUA]} />
      </div>
      <div className="ml-[21px] flex h-[44px] w-[64px] items-center justify-center border-2 border-[#3fb3ee] bg-[#c1c3c9] pb-[6px]">
        <Svg className="h-[22px] w-[30px]" vb="0 0 30 22">
          <Stack x={0} y={0} w={30} rh={6.3} fills={[AQUA, AQUA, AQUA]} />
        </Svg>
      </div>
      <Svg className="ml-[19px] h-[18px] w-[19px]" vb="0 0 19 18">
        <path d="M1 0V18" stroke="#bbb" strokeWidth="2" />
        <path d="M19 0V18L5 9Z" fill="#bbb" />
      </Svg>
      <Svg className="ml-[26px] h-[18px] w-[19px]" vb="0 0 19 18">
        <path d="M18 0V18" stroke="#666" strokeWidth="2" />
        <path d="M0 0V18L15 9Z" fill="#666" />
      </Svg>
      <T w={196} className="ml-[26px] pt-[3px]">17 of 215 selected</T>
      <T w={68} className="ml-[26px] pt-[3px]">Filters:</T>
      <div className="ml-[9px] flex h-[48px] w-[84px] items-center justify-center gap-[12px] bg-[#edeef1] pl-[3px]">
        <Svg className="size-[30px]">
          <circle cx="16" cy="16" r="14.5" fill="#e6eef6" stroke="#d2d4d6" strokeWidth="2" />
          <path d="M10 6Q4 16 10 26L14 20 10 14Z" fill="#d5e6d8" />
          <path d="M17 7V17H24" stroke="#c2c4c6" strokeWidth="2" />
        </Svg>
        <Svg className="size-[30px]">
          <circle cx="16" cy="16" r="14.5" fill="#e9eff5" stroke="#d8dadc" strokeWidth="2" />
          <path d="M20 8Q30 16 22 26L14 22 16 14Z" fill="#d5e6d8" />
          <path d="M4 0V18M11 0V18M18 0V14" stroke="#d3d5d7" strokeWidth="2" />
          <path d="M1 9H8M8 4H14M15 9H21" stroke="#c4e0ec" strokeWidth="4" />
        </Svg>
      </div>
      <Svg className="ml-[8px] h-[32px] w-[34px]" vb="0 0 34 32">
        <path d="M1 1H26V4L17 14V31H11V14L1 4Z" fill="#fff" stroke={G} strokeWidth="2" />
        <path d="M3 4H24L16 14H12Z" fill="#a9a9a9" />
        <rect x="15" y="13" width="19" height="19" fill="#f7f9f8" />
        <path d="M19 15V31M26 15V31M32 15V31" stroke="#4a9bd9" strokeWidth="4" strokeDasharray="4 2" />
      </Svg>
      <Sep className="ml-[3px]" />
      <Svg className="ml-[13px] h-[32px] w-[18px]" vb="0 0 18 32">
        <path d="M9 3V16M2 9 9 2 16 9" stroke="#4f9455" strokeWidth="3.6" />
        <path d="M9 16V29M2 23 9 30 16 23" stroke="#ee9b3b" strokeWidth="3.6" />
      </Svg>
      <div className="ml-[31px] h-[4px] w-[12px] bg-[#666]" />
      <div className="ml-[16px] flex w-[200px] items-center">
        <div className="h-[6px] w-[106px] bg-[#747474]" />
        <div className="h-[22px] w-[6px] bg-[#747474]" />
        <div className="h-[6px] w-[88px] bg-[#dcdddd]" />
      </div>
      <Svg className="ml-[13px] h-[17px] w-[17px]" vb="0 0 17 17">
        <path d="M8.5 0V17M0 8.5H17" stroke="#666" strokeWidth="3.6" />
      </Svg>
      <div className="ml-[14px] flex h-[44px] w-[120px] items-center bg-white text-[#222]">
        <T w={67} className="ml-[12px] pt-[3px]">120 %</T>
        <Svg className="mr-[10px] ml-auto h-[6px] w-[10px]" vb="0 0 12 7">
          <path d="M0 0H12L6 7Z" fill="#444" />
        </Svg>
      </div>
      <Sep className="ml-[9px]" />
    </div>
  );
}

function TablePane() {
  return (
    <div className="mt-[12px] ml-[12px] flex w-[1148px] shrink-0 flex-col">
      <div className="flex h-[44px] items-center">
        <div className="flex h-full w-[266px] items-center rounded-t-[6px] bg-[#007ad0] text-[23.5px] text-white">
          <Svg className="mt-[2px] ml-[12px] h-[27px] w-[30px]" vb="0 0 30 27">
            <rect width="30" height="27" fill={G} />
            <rect x="2" y="2" width="26" height="4" fill={BLUE} />
            {[8, 14, 20].map((y) => [2, 9, 16, 23].map((x) => <rect key={`${x}-${y}`} x={x} y={y} width="5" height="4" fill="#fff" />))}
          </Svg>
          <T w={159} className="ml-[13px] pt-[7px]">MOT_SuelosVF</T>
          <Cross className="mt-[4px] ml-[18px] size-[20px]" color="#d9ecfa" />
        </div>
        <Chevron className="mt-[3px] mr-[10px] ml-auto h-[9px] w-4" color="#666" />
      </div>
      <div className="h-[4px] bg-[#007ad0]" />
      <div className="h-[1639px] border-2 border-[#d1d3d8] bg-[#f7f9f8]">
        <Toolbar />
        <div className="mt-[2px] ml-[2px] h-[1516px] w-[1140px] border-2 border-[#c9cbcc]">
          <Grid />
          <div className="flex h-[41px] items-center bg-[#eaeaea]">
            <Chevron dir="left" className="ml-[15px] h-[16px] w-[10px]" />
            <div className="ml-[428px] h-[22px] w-[159px] rounded-full bg-[#b4b4b4]" />
            <Chevron dir="right" className="ml-[458px] h-[16px] w-[10px]" />
          </div>
        </div>
        <TableStatus />
      </div>
    </div>
  );
}

const rail: [string, number, string][] = [
  ["Catalog", 81, "h-[81px]"],
  ["Geoprocessing", 156, "h-[157px]"],
  ["Symbology", 120, "h-[119px]"],
  ["Label Class", 116, "h-[116px]"],
  ["Chart Properties", 171, "h-[171px]"],
];

function Rail() {
  return (
    <div className="mt-[12px] flex flex-1 flex-col gap-[24px] text-[24px] text-[#4d4d4d]">
      {rail.map(([n, w, h]) => (
        <div key={n} className={`flex items-start justify-end ${h}`}>
          <div className="mr-px w-[38px] leading-[38px] [writing-mode:vertical-rl]">
            <T w={w} vertical>{n}</T>
          </div>
          <div className="h-full w-[11px] bg-[#c0c2c8]" />
        </div>
      ))}
    </div>
  );
}

export default function App() {
  return (
    <div className="flex h-[1838px] w-[3072px] flex-col overflow-hidden bg-[#eaeaea] font-['Open_Sans','Noto_Sans',sans-serif]">
      <div className="h-[115px] shrink-0 border-b-2 border-[#bcbfc3] bg-[#f7f9f8]">
        <TitleBar />
        <Ribbon />
      </div>
      <div className="flex h-[1710px] shrink-0">
        <Contents />
        <MapPane />
        <TablePane />
        <Rail />
      </div>
      <div className="flex-1 border-t-2 border-[#bababa] bg-[#ededed]" />
    </div>
  );
}
